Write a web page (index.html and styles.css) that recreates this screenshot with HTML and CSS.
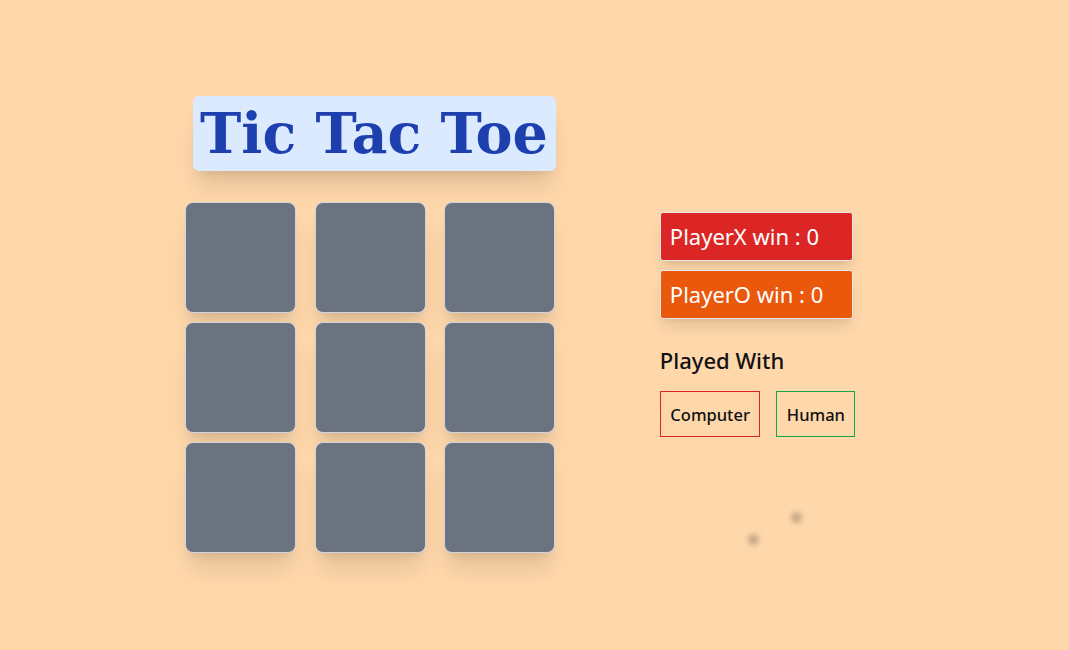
FILE: index.html
```html
<!DOCTYPE html>
<html>
<head>
<meta charset="utf-8">
<link rel="stylesheet" href="styles.css">
</head>
<body>
<main class="page">
  <section class="game">
    <h1 class="title">Tic Tac Toe</h1>
    <div class="board">
      <div class="cell"></div><div class="cell"></div><div class="cell"></div>
      <div class="cell"></div><div class="cell"></div><div class="cell"></div>
      <div class="cell"></div><div class="cell"></div><div class="cell"></div>
    </div>
  </section>
  <aside class="side">
    <div class="score score-x">PlayerX win : 0</div>
    <div class="score score-o">PlayerO win : 0</div>
    <h2 class="played">Played With</h2>
    <div class="modes">
      <button class="mode mode-computer">Computer</button>
      <button class="mode mode-human">Human</button>
    </div>
    <span class="dot dot-a"></span>
    <span class="dot dot-b"></span>
  </aside>
</main>
</body>
</html>
```
FILE: styles.css
```css
html, body {
  margin: 0;
  padding: 0;
  height: 100%;
}
body {
  background: #fed7aa;
  font-family: "Noto Sans", "Open Sans", sans-serif;
}
.page {
  display: flex;
  align-items: flex-start;
  padding-left: 185px;
  padding-top: 96px;
  box-sizing: border-box;
  height: 650px;
}
.game {
  display: flex;
  flex-direction: column;
  align-items: flex-start;
}
.title {
  margin: 0 0 31px 8px;
  background: #dbeafe;
  color: #1e40af;
  font-family: "DejaVu Serif", "Liberation Serif", serif;
  font-weight: 700;
  font-size: 55.5px;
  line-height: 75px;
  height: 75px;
  padding: 0 8px 0 7px;
  border-radius: 6px;
  box-shadow: 0 20px 25px -5px rgba(0,0,0,0.1), 0 8px 10px -6px rgba(0,0,0,0.1);
  white-space: nowrap;
}
.board {
  display: grid;
  grid-template-columns: repeat(3, 111px);
  grid-auto-rows: 111px;
  column-gap: 18.5px;
  row-gap: 9px;
}
.cell {
  background: #6b7280;
  border: 1px solid #d1d5db;
  border-radius: 8px;
  box-shadow: 0 20px 25px -5px rgba(0,0,0,0.1), 0 8px 10px -6px rgba(0,0,0,0.1);
}
.side {
  position: relative;
  margin-left: 104px;
  margin-top: 116px;
  display: flex;
  flex-direction: column;
  align-items: flex-start;
  width: 220px;
}
.score {
  width: 193px;
  height: 49px;
  box-sizing: border-box;
  color: #fff;
  font-size: 22px;
  line-height: 47px;
  padding-left: 9px;
  border: 1px solid #e5e7eb;
  border-radius: 3px;
  margin-bottom: 9px;
  box-shadow: 0 10px 15px -3px rgba(0,0,0,0.1), 0 4px 6px -4px rgba(0,0,0,0.1);
}
.score-x { background: #dc2626; }
.score-o { background: #ea580c; }
.played {
  margin: 17px 0 0 0;
  font-size: 22px;
  font-weight: 500;
  line-height: 30px;
  color: #111;
}
.modes {
  display: flex;
  gap: 16px;
  margin-top: 16px;
}
.mode {
  background: transparent;
  font-family: "Noto Sans", "Open Sans", sans-serif;
  font-size: 16.5px;
  font-weight: 500;
  color: #111;
  height: 46px;
  padding: 0 9.5px;
  border-radius: 0;
}
.mode-computer { border: 1px solid #dc2626; }
.mode-human { border: 1px solid #16a34a; }
.dot {
  position: absolute;
  width: 11px;
  height: 11px;
  border-radius: 50%;
  background: rgba(120,100,80,0.4);
  filter: blur(2.5px);
}
.dot-a { left: 88px; top: 322px; }
.dot-b { left: 131px; top: 300px; }
```
